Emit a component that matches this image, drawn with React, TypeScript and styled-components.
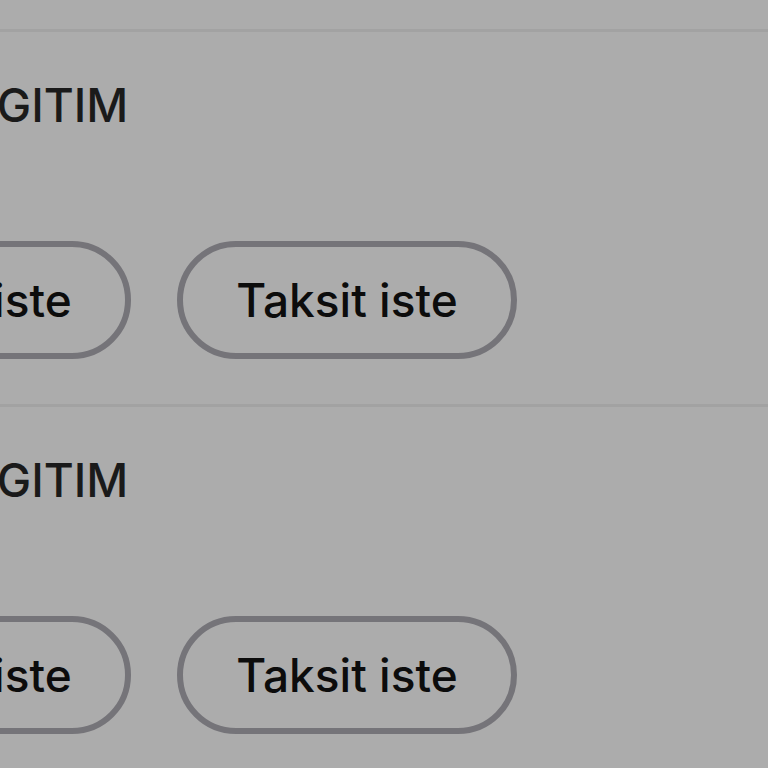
import React from "react";
import styled, { createGlobalStyle } from "styled-components";

const Global = createGlobalStyle`
  html, body { margin: 0; padding: 0; background: #acacac; }
  body { font-family: Inter, "Noto Sans", sans-serif; }
`;

const Page = styled.div`
  width: 768px;
  height: 768px;
  overflow: hidden;
  background: #acacac;
  padding-top: 29px;
  box-sizing: border-box;
`;

const Section = styled.section`
  border-top: 3px solid #a2a2a2;
  padding: 45px 0 45px 0;
  display: flex;
  flex-direction: column;
  gap: 108px;
`;

const Title = styled.h2`
  margin: 0 0 0 -31px;
  font-size: 46px;
  line-height: 56px;
  font-weight: 500;
  color: #1a1a1a;
  letter-spacing: 0;
  white-space: nowrap;
`;

const Actions = styled.div`
  display: flex;
  gap: 46px;
  margin-left: -209px;
`;

const PillButton = styled.button`
  box-sizing: border-box;
  width: 340px;
  height: 118px;
  border: 6px solid #757479;
  border-radius: 59px;
  background: transparent;
  font-family: Inter, "Noto Sans", sans-serif;
  font-size: 46px;
  font-weight: 500;
  color: #0c0c0c;
  display: flex;
  align-items: center;
  justify-content: center;
  padding: 0;
  flex: none;
`;

const sections = [0, 1];

export default function App() {
  return (
    <>
      <Global />
      <Page>
        {sections.map((i) => (
          <Section key={i}>
            <Title>EGITIM</Title>
            <Actions>
              <PillButton>Taksit iste</PillButton>
              <PillButton>Taksit iste</PillButton>
            </Actions>
          </Section>
        ))}
      </Page>
    </>
  );
}
